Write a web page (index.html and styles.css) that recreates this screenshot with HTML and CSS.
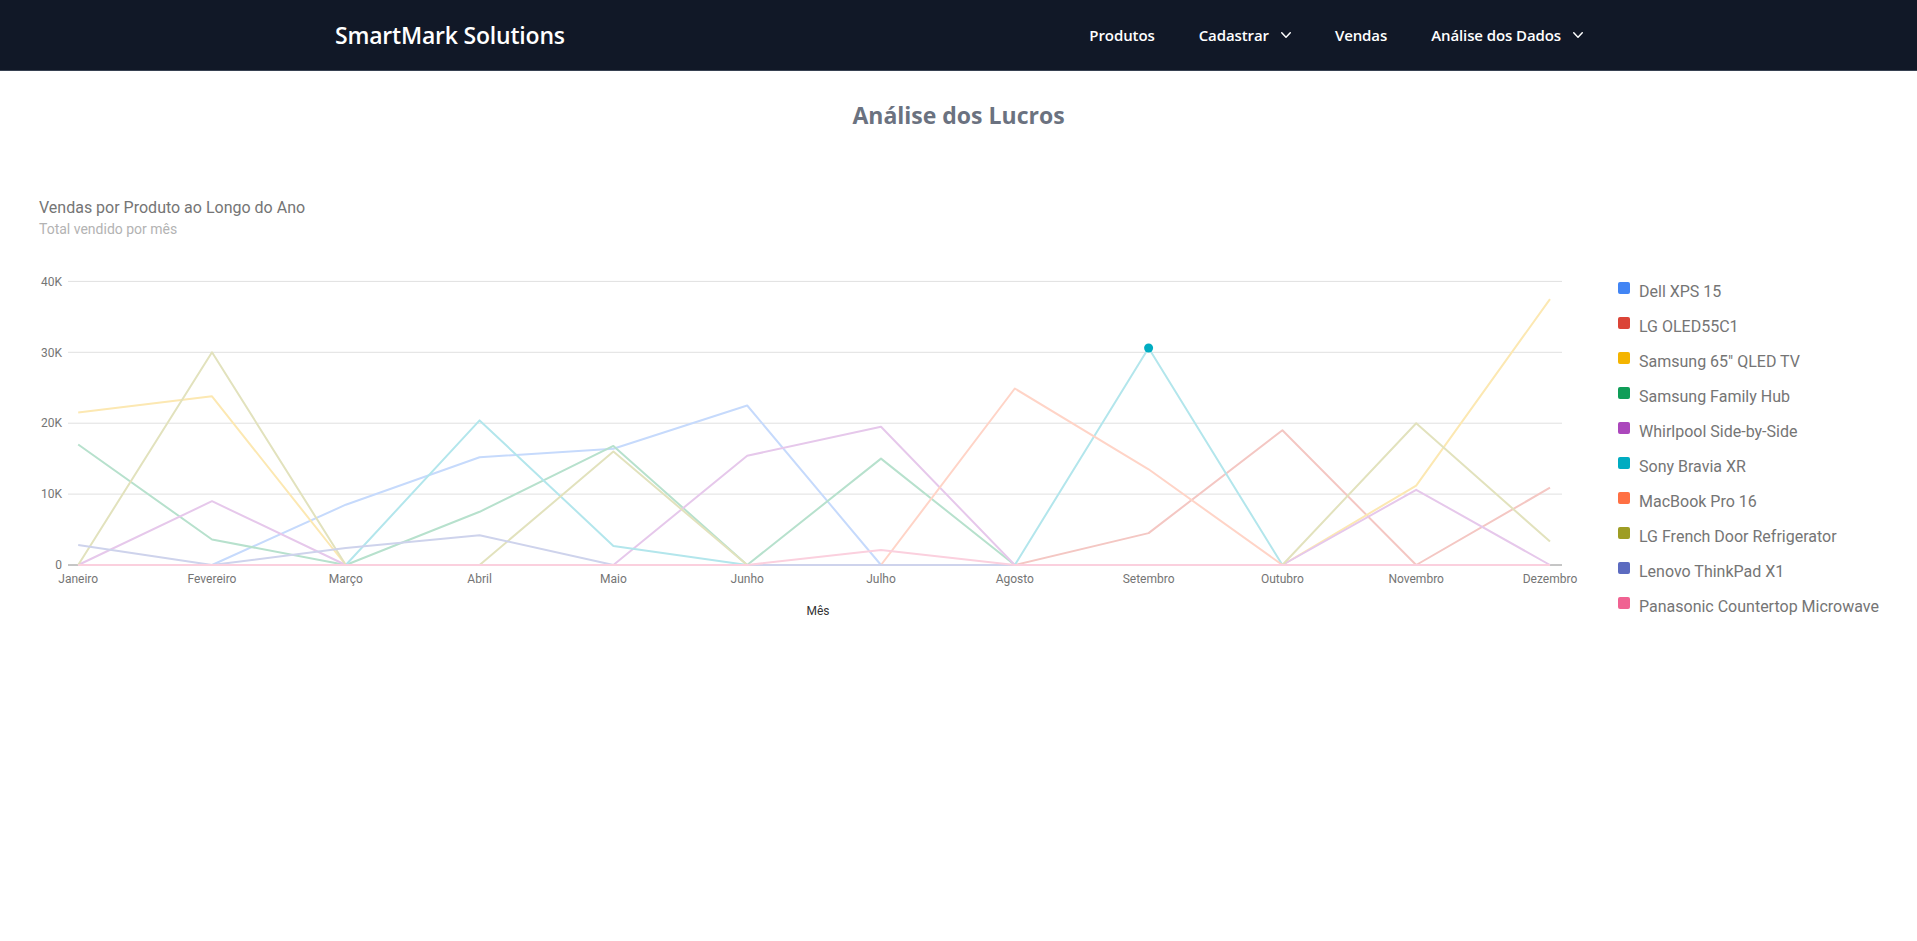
FILE: index.html
```html
<!DOCTYPE html>
<html lang="pt-BR">
<head>
<meta charset="utf-8">
<title>SmartMark Solutions - Análise dos Lucros</title>
<link rel="stylesheet" href="styles.css">
</head>
<body>
<nav class="navbar">
  <div class="nav-inner">
    <a class="brand" href="#">SmartMark Solutions</a>
    <ul class="nav-links">
      <li class="nav-link">Produtos</li>
      <li class="nav-link">Cadastrar
        <svg class="chev" viewBox="0 0 20 20" width="20" height="20" aria-hidden="true"><path fill="currentColor" fill-rule="evenodd" d="M5.23 7.21a.75.75 0 011.06.02L10 11.168l3.71-3.938a.75.75 0 111.08 1.04l-4.25 4.5a.75.75 0 01-1.080 0l-4.25-4.5a.75.75 0 01.02-1.06z"/></svg>
      </li>
      <li class="nav-link">Vendas</li>
      <li class="nav-link">Análise dos Dados
        <svg class="chev" viewBox="0 0 20 20" width="20" height="20" aria-hidden="true"><path fill="currentColor" fill-rule="evenodd" d="M5.23 7.21a.75.75 0 011.06.02L10 11.168l3.71-3.938a.75.75 0 111.08 1.04l-4.25 4.5a.75.75 0 01-1.08 0l-4.25-4.5a.75.75 0 01.02-1.06z"/></svg>
      </li>
    </ul>
  </div>
</nav>

<main class="page">
  <h1 class="page-title">Análise dos Lucros</h1>

  <section class="chart-card">
    <div class="chart-head">
      <div class="chart-title">Vendas por Produto ao Longo do Ano</div>
      <div class="chart-subtitle">Total vendido por mês</div>
    </div>

    <div class="chart-body">
      <svg class="plot" width="1560" height="393" viewBox="30 237 1560 393">
        <g class="grid">
          <line x1="68" y1="281.4" x2="1562" y2="281.4"/>
          <line x1="68" y1="352.3" x2="1562" y2="352.3"/>
          <line x1="68" y1="423.2" x2="1562" y2="423.2"/>
          <line x1="68" y1="494.1" x2="1562" y2="494.1"/>
        </g>
        <line class="baseline" x1="68" y1="565" x2="1562" y2="565"/>
        <g class="ylabels">
          <text x="62" y="285.6">40K</text>
          <text x="62" y="356.5">30K</text>
          <text x="62" y="427.4">20K</text>
          <text x="62" y="498.3">10K</text>
          <text x="62" y="569.2">0</text>
        </g>
        <g class="series">
          <polyline class="s-dell" points="78.2,565 212,565 345.8,504.7 479.6,457.2 613.4,448.7 747.2,405.5 881,565 1014.8,565 1148.6,565 1282.4,565 1416.2,565 1550,565"/>
          <polyline class="s-lgoled" points="78.2,565 212,565 345.8,565 479.6,565 613.4,565 747.2,565 881,565 1014.8,565 1148.6,533.1 1282.4,430.3 1416.2,565 1550,487.7"/>
          <polyline class="s-qled" points="78.2,412.6 212,396.3 345.8,565 479.6,565 613.4,565 747.2,565 881,565 1014.8,565 1148.6,565 1282.4,565 1416.2,485.6 1550,299.1"/>
          <polyline class="s-hub" points="78.2,444.5 212,539.5 345.8,565 479.6,511.8 613.4,445.9 747.2,565 881,458.6 1014.8,565 1148.6,565 1282.4,565 1416.2,565 1550,565"/>
          <polyline class="s-whirl" points="78.2,565 212,501.2 345.8,565 479.6,565 613.4,565 747.2,455.8 881,426.7 1014.8,565 1148.6,565 1282.4,565 1416.2,489.8 1550,565"/>
          <polyline class="s-sony" points="78.2,565 212,565 345.8,565 479.6,420.4 613.4,545.9 747.2,565 881,565 1014.8,565 1148.6,348 1282.4,565 1416.2,565 1550,565"/>
          <polyline class="s-mac" points="78.2,565 212,565 345.8,565 479.6,565 613.4,565 747.2,565 881,565 1014.8,388.5 1148.6,469.3 1282.4,565 1416.2,565 1550,565"/>
          <polyline class="s-lgfr" points="78.2,565 212,352.3 345.8,565 479.6,565 613.4,451.6 747.2,565 881,565 1014.8,565 1148.6,565 1282.4,565 1416.2,423.2 1550,541.6"/>
          <polyline class="s-lenovo" points="78.2,545.1 212,565 345.8,548 479.6,535.2 613.4,565 747.2,565 881,565 1014.8,565 1148.6,565 1282.4,565 1416.2,565 1550,565"/>
          <polyline class="s-pana" points="78.2,565 212,565 345.8,565 479.6,565 613.4,565 747.2,565 881,550.1 1014.8,565 1148.6,565 1282.4,565 1416.2,565 1550,565"/>
        </g>
        <circle class="focus-dot" cx="1148.6" cy="348" r="4.5"/>
        <g class="xlabels">
          <text x="78.2" y="583">Janeiro</text>
          <text x="212" y="583">Fevereiro</text>
          <text x="345.8" y="583">Março</text>
          <text x="479.6" y="583">Abril</text>
          <text x="613.4" y="583">Maio</text>
          <text x="747.2" y="583">Junho</text>
          <text x="881" y="583">Julho</text>
          <text x="1014.8" y="583">Agosto</text>
          <text x="1148.6" y="583">Setembro</text>
          <text x="1282.4" y="583">Outubro</text>
          <text x="1416.2" y="583">Novembro</text>
          <text x="1550" y="583">Dezembro</text>
        </g>
        <text class="axis-title" x="818" y="615">Mês</text>
      </svg>

      <ul class="legend">
        <li class="legend-item"><span class="swatch sw-dell"></span>Dell XPS 15</li>
        <li class="legend-item"><span class="swatch sw-lgoled"></span>LG OLED55C1</li>
        <li class="legend-item"><span class="swatch sw-qled"></span>Samsung 65" QLED TV</li>
        <li class="legend-item"><span class="swatch sw-hub"></span>Samsung Family Hub</li>
        <li class="legend-item"><span class="swatch sw-whirl"></span>Whirlpool Side-by-Side</li>
        <li class="legend-item"><span class="swatch sw-sony"></span>Sony Bravia XR</li>
        <li class="legend-item"><span class="swatch sw-mac"></span>MacBook Pro 16</li>
        <li class="legend-item"><span class="swatch sw-lgfr"></span>LG French Door Refrigerator</li>
        <li class="legend-item"><span class="swatch sw-lenovo"></span>Lenovo ThinkPad X1</li>
        <li class="legend-item"><span class="swatch sw-pana"></span>Panasonic Countertop Microwave</li>
      </ul>
    </div>
  </section>
</main>
</body>
</html>
```

FILE: styles.css
```css
* { box-sizing: border-box; }

html, body {
  margin: 0;
  padding: 0;
  background: #ffffff;
}

body {
  font-family: "Open Sans", "Noto Sans", "Liberation Sans", sans-serif;
  width: 1917px;
  height: 941px;
  overflow: hidden;
}

/* ---------- Navbar ---------- */
.navbar {
  background: #111827;
  height: 71px;
  border-bottom: 1px solid #374151;
}

.nav-inner {
  height: 100%;
  display: flex;
  align-items: center;
  padding-left: 335px;
  padding-right: 334px;
}

.brand {
  color: #ffffff;
  text-decoration: none;
  font-weight: 600;
  font-size: 23px;
  letter-spacing: -0.2px;
}

.nav-links {
  list-style: none;
  margin: 0 0 0 auto;
  padding: 0;
  display: flex;
  align-items: center;
  gap: 44px;
}

.nav-link {
  color: #ffffff;
  font-size: 15px;
  font-weight: 600;
  display: flex;
  align-items: center;
  letter-spacing: -0.1px;
}

.chev {
  width: 20px;
  height: 20px;
  margin-left: 7px;
  margin-right: -5px;
  color: #ffffff;
}

/* ---------- Page ---------- */
.page-title {
  margin: 28px 0 0;
  text-align: center;
  font-size: 23px;
  line-height: 32px;
  font-weight: 700;
  color: #6b7280;
}

.chart-card {
  margin-top: 66px;
  padding-left: 30px;
  font-family: Roboto, "Liberation Sans", sans-serif;
}

.chart-head {
  padding-left: 9px;
}

.chart-title {
  font-size: 16px;
  line-height: 21px;
  color: #757575;
  margin-bottom: 3px;
}

.chart-subtitle {
  font-size: 14px;
  line-height: 16px;
  color: #b3b3b3;
}

.chart-body {
  display: flex;
  align-items: flex-start;
}

.plot {
  display: block;
  flex: none;
}

.grid line {
  stroke: #e0e0e0;
  stroke-width: 1;
}

.baseline {
  stroke: #8c8c8c;
  stroke-width: 1;
}

.ylabels text {
  font-family: Roboto, sans-serif;
  font-size: 12px;
  fill: #757575;
  text-anchor: end;
}

.xlabels text {
  font-family: Roboto, sans-serif;
  font-size: 12px;
  fill: #757575;
  text-anchor: middle;
}

.axis-title {
  font-family: Roboto, sans-serif;
  font-size: 12px;
  fill: #333333;
  text-anchor: middle;
}

.series polyline {
  fill: none;
  stroke-width: 2;
  stroke-linejoin: round;
}

.s-dell { stroke: #c6dafc; }
.s-lgoled { stroke: #f4c7c3; }
.s-qled { stroke: #fce8b2; }
.s-hub { stroke: #b7e1cd; }
.s-whirl { stroke: #e6c8eb; }
.s-sony { stroke: #b3e6ec; }
.s-mac { stroke: #ffd4c7; }
.s-lgfr { stroke: #e2e2bd; }
.s-lenovo { stroke: #ced3ec; }
.s-pana { stroke: #fbd0de; }

.focus-dot {
  fill: #00ACC1;
}

/* ---------- Legend ---------- */
.legend {
  list-style: none;
  margin: 0;
  padding: 36.5px 0 0 28px;
}

.legend-item {
  display: flex;
  align-items: flex-start;
  height: 35px;
  line-height: 35px;
  font-size: 16px;
  color: #757575;
  white-space: nowrap;
}

.swatch {
  flex: none;
  width: 12px;
  height: 12px;
  border-radius: 2px;
  margin-top: 8.2px;
  margin-right: 9px;
}

.sw-dell { background: #4285F4; }
.sw-lgoled { background: #DB4437; }
.sw-qled { background: #F4B400; }
.sw-hub { background: #0F9D58; }
.sw-whirl { background: #AB47BC; }
.sw-sony { background: #00ACC1; }
.sw-mac { background: #FF7043; }
.sw-lgfr { background: #9E9D24; }
.sw-lenovo { background: #5C6BC0; }
.sw-pana { background: #F06292; }
```
